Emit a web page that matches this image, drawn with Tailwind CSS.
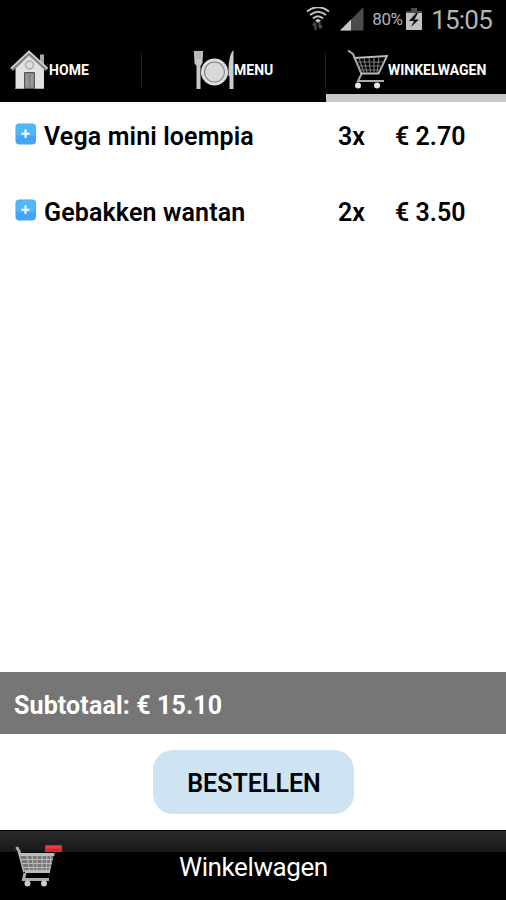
<!DOCTYPE html>
<html lang="nl">

<head>
    <meta charset="UTF-8">
    <meta name="viewport" content="width=device-width, initial-scale=1.0">
    <title>Winkelwagen</title>
    <script src="https://cdn.jsdelivr.net/npm/@tailwindcss/browser@4"></script>
</head>

<body class="bg-white font-['Roboto',sans-serif] h-[900px] flex flex-col overflow-hidden text-black">

    <!-- Statusbalk -->
    <div class="h-[38px] shrink-0 bg-black flex items-center justify-end pr-[14px] pt-[2px] text-[#b4b4b4] whitespace-nowrap">
        <svg class="w-6 h-[26px] mr-[10px] shrink-0" viewBox="0 0 24 26" fill="none" stroke="#c4c4c4" stroke-width="2">
            <path d="M1 4.500Q12-4 23 4.500M4 8Q12 1.500 20 8M7 11.500Q12 7 17 11.500" />
            <path d="M9 13.500Q12 10.500 15 13.500L12 16Z" fill="#c4c4c4" stroke="none" />
            <path d="M9.500 23V16M7 18.500L9.500 15.500M13.500 15V21M16 18.500L13.500 21.500" stroke="#4a4a4a" stroke-width="2.200" />
        </svg>
        <svg class="w-6 h-6 mr-2 shrink-0" viewBox="0 0 24 24">
            <path d="M0 22.500L23.500 -1V22.500Z" fill="#4b4b4b" />
            <path d="M0 22.500L11 11.500V22.500Z" fill="#c8c8c8" />
        </svg>
        <span class="text-[17px] w-[31px] mr-[3px] tracking-[-0.4px]">80%</span>
        <svg class="w-4 h-6 mr-[9px] shrink-0" viewBox="0 0 16 24">
            <path d="M5 -1H11V3H16V8H0V3H5Z" fill="#4b4b4b" />
            <path d="M0 5H16V22H0Z" fill="#c0c0c0" />
            <path d="M10 5L3 13L8 13L5 19L13 11.500L8.500 11.500L12 5Z" fill="#111" />
        </svg>
        <span class="text-[26px] tracking-[-0.8px]">15:05</span>
    </div>

    <!-- Tabs -->
    <div class="h-16 shrink-0 bg-black flex items-center text-white text-[14px] font-bold">
        <a href="#" class="w-[141px] flex items-center pl-[10px]">
            <svg class="w-[39px] h-10 shrink-0" viewBox="0 0 39 40">
                <path d="M30 4.500H34V16H30Z" fill="#aaa" />
                <path d="M5.500 18L19 5L34 18V39H5.500Z" fill="#e2e2e2" />
                <path d="M5.500 38.500H34" stroke="#aaa" />
                <path d="M1.500 19.500L19 3L37 19.500" fill="none" stroke="#888" stroke-width="4" />
                <path d="M1 18.500L19 1.500L37.500 18.500" fill="none" stroke="#d8d8d8" stroke-width="1.500" />
                <circle cx="19.500" cy="15" r="4" fill="#ddd" stroke="#aaa" stroke-width="1.500" />
                <path d="M14.500 22.500H24.500V38.500H14.500Z" fill="#888" stroke="#555" />
                <path d="M17 25V36M22 25V36" stroke="#aaa" />
            </svg>
            <span class="tracking-[0.05px]">HOME</span>
        </a>
        <a href="#" class="w-[185px] h-[34px] flex items-center border-x border-[#222] pl-[51px]">
            <svg class="w-[41px] h-10 shrink-0" viewBox="0 0 41 40">
                <path d="M1 1H10L9.500 13L7.500 16V39H3.500V16L1.500 13Z" fill="#c8c8c8" />
                <path d="M4 1V9M7 1V9" stroke="#999" />
                <circle cx="21.500" cy="22" r="13.500" fill="#ddd" />
                <circle cx="21.500" cy="22" r="10" fill="#d8d8d8" stroke="#888" stroke-width="1.200" />
                <path d="M40.500 0V39H36.500V26H35.500Q35 5 40.500 0Z" fill="#ccc" />
            </svg>
            <span>MENU</span>
        </a>
        <a href="#" class="flex-1 h-full flex flex-col">
            <div class="flex-1 flex items-center pl-[21px] pt-2">
                <svg class="w-[41px] h-10 shrink-0" viewBox="0 0 41 40" fill="none">
                    <path d="M1 0.500L6 4L14.500 24L11 31H37" stroke="#aaa" stroke-width="2" />
                    <path d="M7 8L40 6L31.500 23.500H14" stroke="#bbb" stroke-width="1.800" />
                    <path d="M9 12H37M11 16H35M12.500 20H33M12 8L17 23M17 8L20 23M22 8L23.500 23M27 7L27 23M32 7L30 23" stroke="#777" stroke-width="1.200" />
                    <circle cx="11" cy="35.500" r="3" fill="#e8e8e8" />
                    <circle cx="30" cy="35.500" r="3" fill="#e8e8e8" />
                </svg>
                <span>WINKELWAGEN</span>
            </div>
            <div class="h-2 bg-[#c8c8c8]"></div>
        </a>
    </div>

    <!-- Producten -->
    <div class="flex-1 text-[25px] font-semibold whitespace-nowrap">
        <div class="h-[76px] flex items-start pt-5 pl-[15px] leading-[30px]">
            <svg class="w-[22px] h-[22px] mt-px mr-[7px] shrink-0" viewBox="0 0 22 22">
                <rect x=".5" y=".5" width="20.500" height="21" rx="4" fill="#42a5f5" />
                <rect x="1" y="1" width="19.500" height="12" rx="4" fill="#52b7f9" />
                <path d="M10.500 6.500V15M6.500 10.800H14.500" stroke="#fff" stroke-width="2" />
            </svg>
            <span class="w-[294px] tracking-[0.13px]">Vega mini loempia</span>
            <span class="w-[57px]">3x</span>
            <span>€ 2.70</span>
        </div>
        <div class="h-[76px] flex items-start pt-5 pl-[15px] leading-[30px]">
            <svg class="w-[22px] h-[22px] mt-px mr-[7px] shrink-0" viewBox="0 0 22 22">
                <rect x=".5" y=".5" width="20.500" height="21" rx="4" fill="#42a5f5" />
                <rect x="1" y="1" width="19.500" height="12" rx="4" fill="#52b7f9" />
                <path d="M10.500 6.500V15M6.500 10.800H14.500" stroke="#fff" stroke-width="2" />
            </svg>
            <span class="w-[294px] tracking-[0.13px]">Gebakken wantan</span>
            <span class="w-[57px]">2x</span>
            <span>€ 3.50</span>
        </div>
    </div>

    <!-- Subtotaal -->
    <div class="h-[62px] shrink-0 bg-[#767676] flex items-center pl-[14px] pt-[5px] text-white text-[25px] font-bold">
        <span class="tracking-[0.13px]">Subtotaal: € 15.10</span>
    </div>

    <!-- Bestellen -->
    <div class="h-24 shrink-0 flex justify-center items-start pt-4">
        <button class="w-[201px] h-16 pt-[3px] pl-[2px] rounded-[20px] bg-[#cee4f2] text-[25px] font-semibold">BESTELLEN</button>
    </div>

    <!-- Onderbalk -->
    <div class="h-[70px] shrink-0 bg-black border-t border-black flex flex-col">
        <div class="h-[21px] bg-linear-to-b from-[#2a2a2a] to-[#181818]"></div>
        <div class="flex-1 flex items-start text-white">
            <svg class="w-12 h-[48px] -mt-[8px] ml-[15px] shrink-0" viewBox="0 0 48 48" fill="none">
                <path d="M30 1H47V8H30Z" fill="#d9262b" />
                <path d="M31 2H46V4.500H31Z" fill="#f03a3c" />
                <path d="M1.500 3L4 7L9.500 28" stroke="#aaa" stroke-width="3" />
                <path d="M5 10H39L35 28H10Z" fill="#777" />
                <path d="M6 15.500H38M7 19.500H37M8 23.500H36M12 12L15 28M17 12L19 28M22 12V28M27 12V28M32 12L31 28M36 12L34 28" stroke="#bbb" />
                <path d="M4 10.500H39.500M10 27.500H35" stroke="#bbb" stroke-width="3" />
                <path d="M10 29L8.500 35.500H34" stroke="#aaa" stroke-width="3" />
                <circle cx="12.500" cy="39.500" r="3" fill="#ccc" />
                <circle cx="29" cy="39.500" r="3" fill="#ccc" />
            </svg>
            <span class="ml-[116px] text-[26px] leading-[30px] tracking-[-0.4px]">Winkelwagen</span>
        </div>
    </div>
</body>

</html>
